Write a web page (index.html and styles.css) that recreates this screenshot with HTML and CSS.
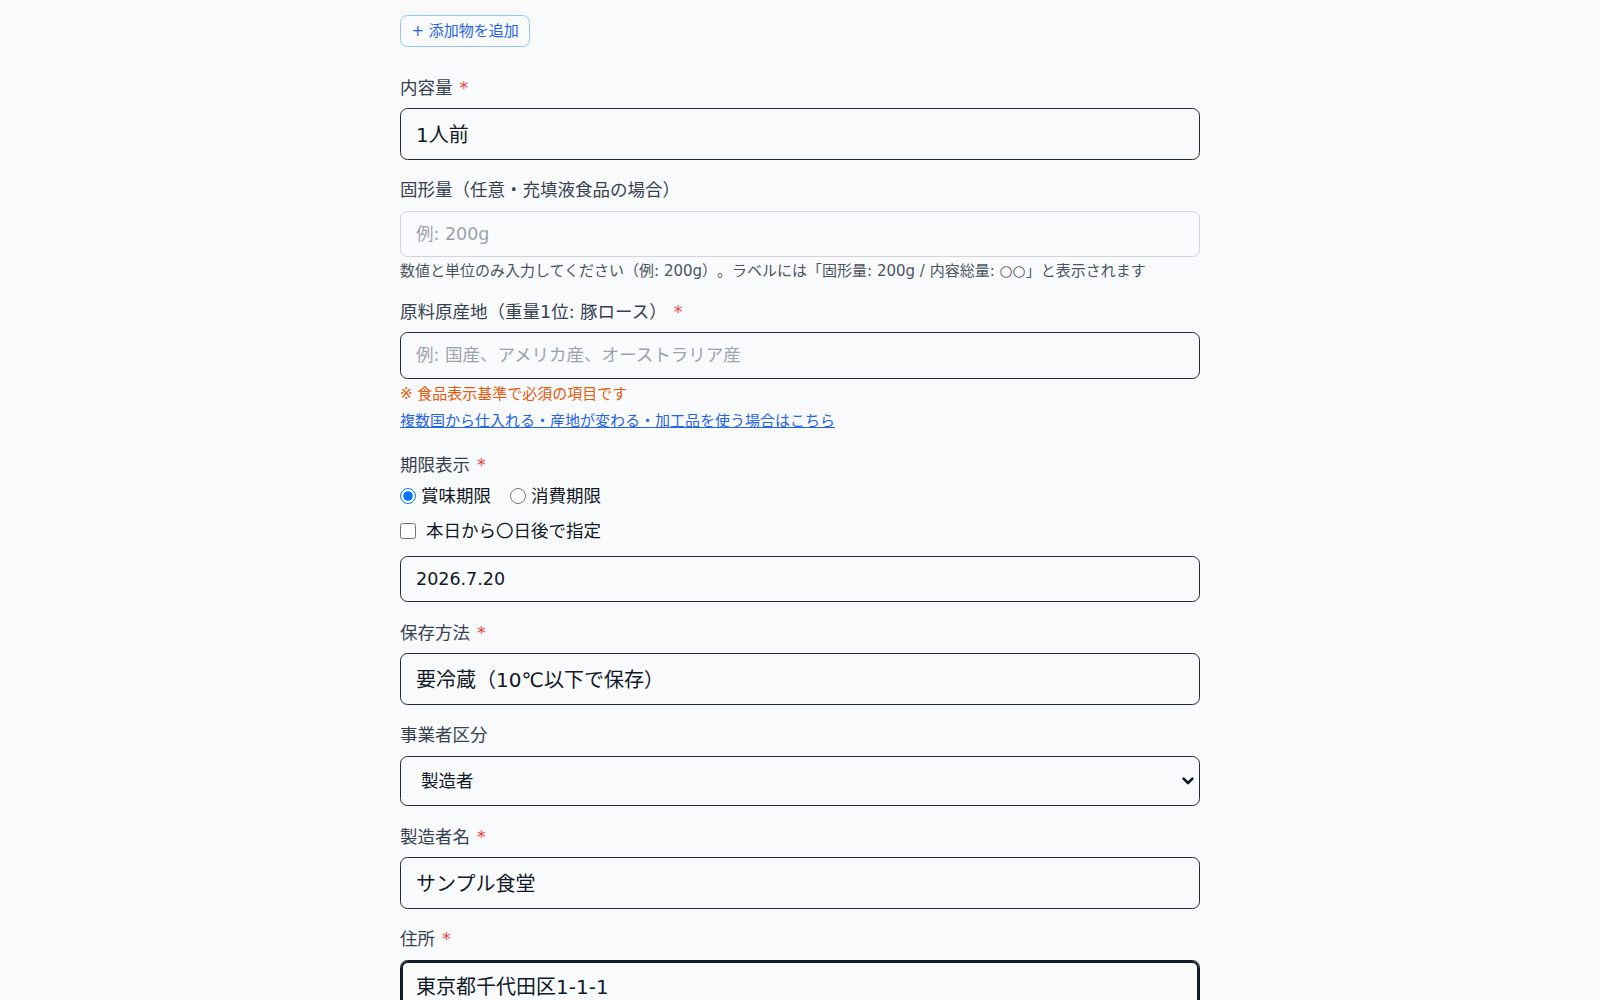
FILE: index.html
```html
<!DOCTYPE html>
<html lang="ja">
<head>
    <meta charset="UTF-8">
    <meta name="viewport" content="width=device-width, initial-scale=1.0">
    <title>食品表示ラベル作成</title>
    <link rel="stylesheet" href="styles.css">
</head>
<body>
    <div class="form">
        <div class="add-row">
            <button type="button" class="add-btn">+ 添加物を追加</button>
        </div>

        <div class="field">
            <label class="label">内容量<span class="req">*</span></label>
            <input type="text" class="input tall" value="1人前">
        </div>

        <div class="field">
            <label class="label">固形量（任意・充填液食品の場合）</label>
            <input type="text" class="input light" placeholder="例: 200g">
            <p class="help">数値と単位のみ入力してください（例: 200g）。ラベルには「固形量: 200g / 内容総量: ○○」と表示されます</p>
        </div>

        <div class="field">
            <label class="label">原料原産地（重量1位: 豚ロース）<span class="req">*</span></label>
            <input type="text" class="input" placeholder="例: 国産、アメリカ産、オーストラリア産">
            <p class="help note">※ 食品表示基準で必須の項目です</p>
            <p class="help link-row"><a href="#" class="link">複数国から仕入れる・産地が変わる・加工品を使う場合はこちら</a></p>
        </div>

        <div class="field">
            <label class="label group-label">期限表示<span class="req">*</span></label>
            <div class="choices">
                <label class="choice"><input type="radio" name="kigen" checked><span>賞味期限</span></label>
                <label class="choice"><input type="radio" name="kigen"><span>消費期限</span></label>
            </div>
            <label class="check"><input type="checkbox"><span>本日から〇日後で指定</span></label>
            <input type="text" class="input date" value="2026.7.20">
        </div>

        <div class="field">
            <label class="label">保存方法<span class="req">*</span></label>
            <input type="text" class="input tall" value="要冷蔵（10℃以下で保存）">
        </div>

        <div class="field">
            <label class="label">事業者区分</label>
            <select class="select">
                <option>製造者</option>
                <option>加工者</option>
                <option>販売者</option>
                <option>輸入者</option>
            </select>
        </div>

        <div class="field">
            <label class="label">製造者名<span class="req">*</span></label>
            <input type="text" class="input tall" value="サンプル食堂">
        </div>

        <div class="field">
            <label class="label">住所<span class="req">*</span></label>
            <input type="text" class="input tall focus" value="東京都千代田区1-1-1">
        </div>
    </div>
</body>
</html>
```

FILE: styles.css
```css
body {
    margin: 0;
    background: #f9fafb;
    font-family: "DejaVu Sans", "Noto Sans CJK JP", sans-serif;
    color: #111827;
    text-spacing-trim: space-all;
}
.form {
    max-width: 800px;
    margin: 0 auto;
    padding: 15px 0 60px;
}
.add-row {
    margin-bottom: 28.5px;
}
.add-btn {
    font-family: inherit;
    font-size: 15px;
    line-height: 20px;
    padding: 5px 10.5px;
    color: #2563eb;
    background: transparent;
    border: 1px solid #93c5fd;
    border-radius: 7.5px;
}
.field {
    margin-bottom: 18.5px;
}
.label {
    display: block;
    font-size: 17.5px;
    line-height: 25px;
    color: #374151;
    margin-bottom: 7.5px;
}
.group-label {
    margin-bottom: 5.5px;
}
.req {
    color: #ef4444;
    margin-left: 7px;
}
.input {
    display: block;
    width: 100%;
    height: 46.5px;
    box-sizing: border-box;
    font-family: inherit;
    font-size: 17.5px;
    padding: 0 15px;
    border: 1px solid #1f2937;
    border-radius: 7.5px;
    background: transparent;
    color: #111827;
}
.input.tall {
    height: 51.5px;
    font-size: 20px;
}
.input::placeholder {
    color: #9ca3af;
}
.input.light {
    border-color: #d1d5db;
}
.input.focus {
    outline: none;
    border-color: #111827;
    box-shadow: inset 0 0 0 2px #111827;
}
.input.date {
    margin-top: 12px;
}
.help {
    margin: 4px 0 0;
    font-size: 15px;
    line-height: 20px;
    color: #4b5563;
}
.note {
    color: #ea580c;
    margin-top: 5px;
}
.link-row {
    margin-top: 7px;
    padding-bottom: 4px;
}
.link {
    color: #2563eb;
    text-decoration: underline;
}
.choices {
    display: flex;
    gap: 19px;
}
.choice, .check {
    display: flex;
    align-items: center;
    font-size: 17.5px;
    line-height: 25px;
    color: #111827;
}
.choice input, .check input {
    width: 16px;
    height: 16px;
    margin: 0;
}
.choice span {
    margin-left: 5px;
}
.check {
    margin-top: 10px;
}
.check span {
    margin-left: 10px;
}
.select {
    display: block;
    width: 100%;
    height: 50.5px;
    box-sizing: border-box;
    appearance: none;
    font-family: inherit;
    font-size: 17.5px;
    padding: 0 30px 0 20px;
    border: 1px solid #1f2937;
    border-radius: 7.5px;
    background: transparent url("data:image/svg+xml,%3Csvg xmlns='http://www.w3.org/2000/svg' width='12' height='8' viewBox='0 0 12 8'%3E%3Cpath d='M1.6 1.6 6 6 10.4 1.6' fill='none' stroke='%23111827' stroke-width='2.6' stroke-linecap='round' stroke-linejoin='round'/%3E%3C/svg%3E") no-repeat right 5px center;
    color: #111827;
}
```
